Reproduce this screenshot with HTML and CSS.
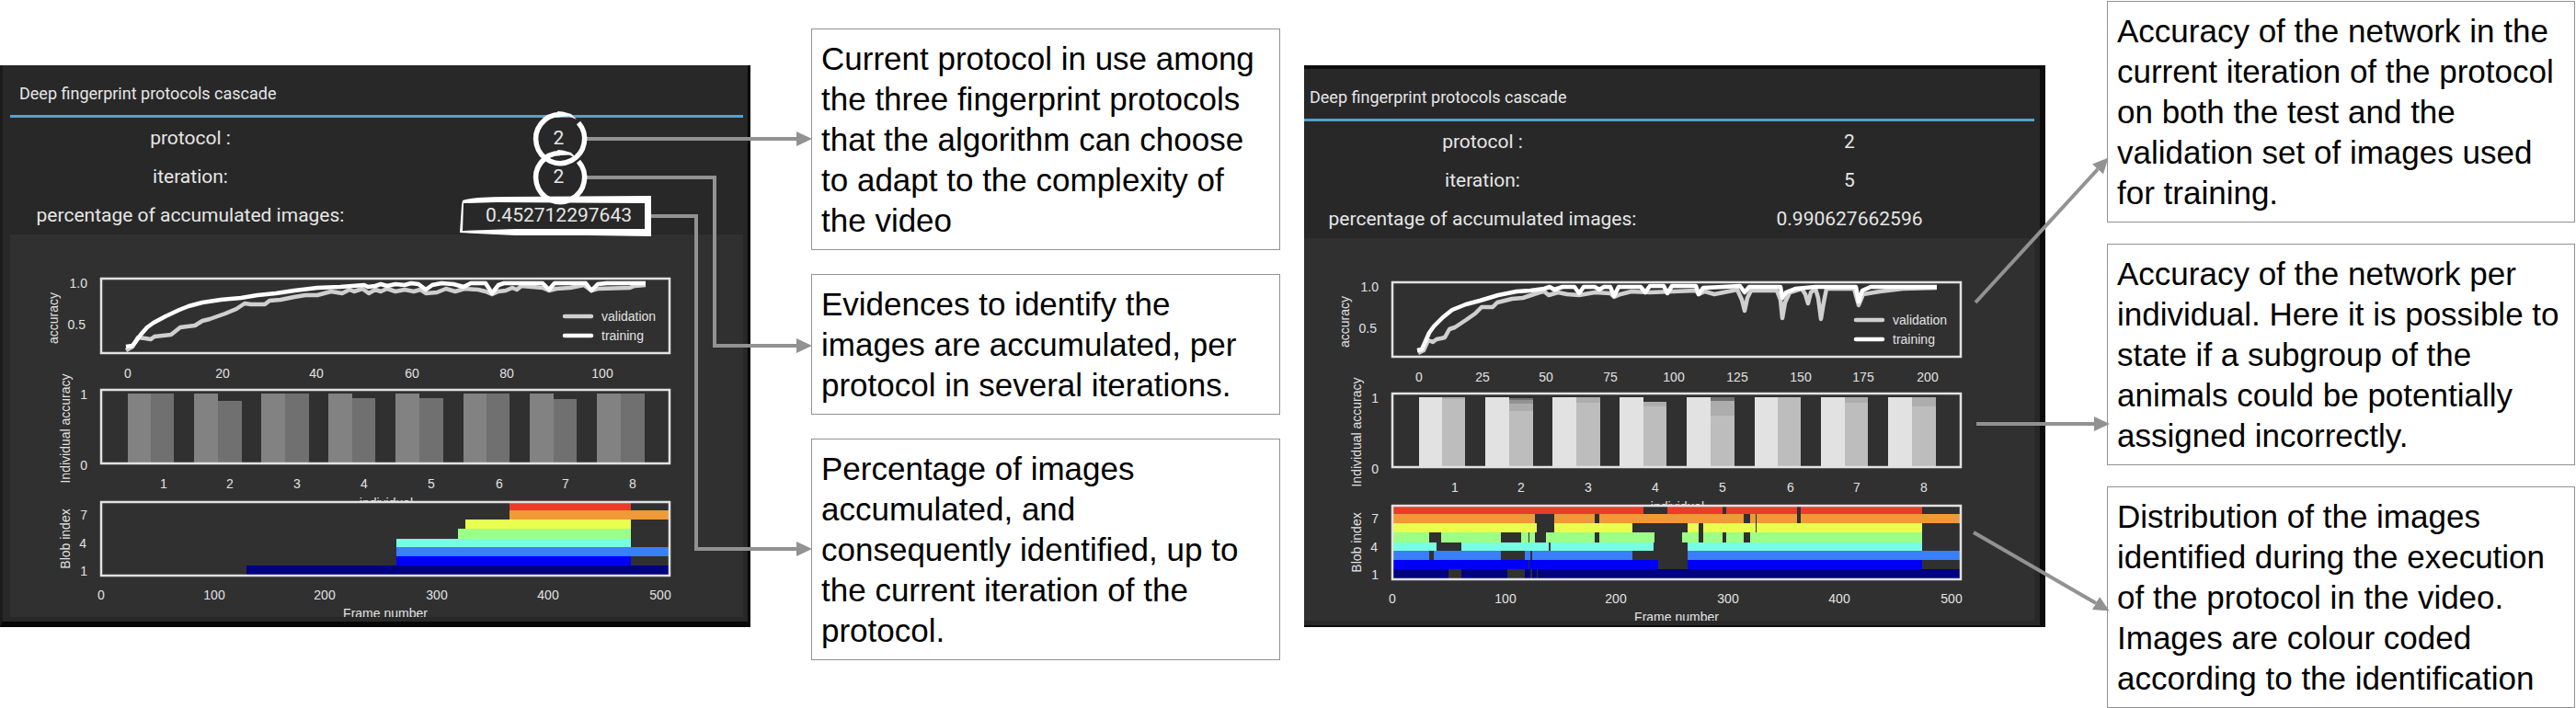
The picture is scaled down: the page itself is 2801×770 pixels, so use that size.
FILE: index.html
```html
<!DOCTYPE html>
<html lang="en">
<head>
<meta charset="utf-8">
<title>Deep fingerprint protocols cascade</title>
<link rel="stylesheet" href="styles.css">
</head>
<body>
<main class="figure">
  <section class="panel panel-early">
    <h2 class="panel-title">Deep fingerprint protocols cascade</h2>
    <dl class="stats">
      <dt>protocol :</dt><dd>2</dd>
      <dt>iteration:</dt><dd>2</dd>
      <dt>percentage of accumulated images:</dt><dd>0.452712297643</dd>
    </dl>
    <svg class="charts" viewBox="11 255 797 416" role="img" aria-label="Training charts, iteration 2">
      <g class="validation"><path d="M137 381L144 377 150 367 158 368 164 369 168 366 186 364 196 356 212 354 220 349 228 347 245 341 257 336 266 330 273 331 288 331 293 327 305 326 320 323 332 321 345 321 360 317 372 319 380 315 385 317 394 314 401 319 408 315 414 317 421 314 430 317 440 315 450 317 457 315 463 319 475 318 485 314 495 317 505 314 520 315 528 317 535 320 542 317 550 316 557 313 562 315 567 311 590 313 597 316 605 314 620 313 635 310 643 316 650 314 685 313 690 311 702 310"/></g>
      <g class="training"><path d="M137 377L144 376 148 371 153 364 160 356 167 351 180 344 195 337 205 333 220 329 240 326 262 324 280 321 300 319 320 316 345 313 370 312 396 310 400 312 408 311 414 309 421 311 430 309 440 310 447 308 455 309 463 315 470 310 480 308 493 309 504 312 512 308 528 308 535 319 542 310 548 308 590 308 597 315 603 308 637 308 643 316 650 309 660 308 702 308"/></g>
      <rect class="frame" x="110" y="303" width="618" height="81"/>
      <path class="validation" stroke-linecap="round" d="M614 344H643"/>
      <path class="training" stroke-linecap="round" d="M614 365H643"/>
      <text x="654" y="349">validation</text><text x="654" y="370">training</text>
      <g class="end"><text x="95" y="313">1.0</text><text x="93" y="358">0.5</text></g>
      <text class="mid" transform="translate(63 346) rotate(-90)">accuracy</text>
      <g class="mid"><text x="139" y="411">0</text><text x="242" y="411">20</text><text x="344" y="411">40</text><text x="448" y="411">60</text><text x="551" y="411">80</text><text x="655" y="411">100</text></g>

      <g fill="#828282"><path d="M139 428h25v76h-25zM211 428h26v76h-26zM284 428h26v76h-26zM357 428h26v76h-26zM430 428h26v76h-26zM504 428h25v76h-25zM576 428h26v76h-26zM649 428h26v76h-26z"/></g>
      <g fill="#707070"><path d="M164 428h25v76h-25zM237 436h26v68h-26zM310 428h26v76h-26zM383 433h25v71h-25zM456 433h26v71h-26zM529 428h25v76h-25zM602 434h25v70h-25zM675 428h26v76h-26z"/></g>
      <rect class="frame" x="110" y="424" width="618" height="80"/>
      <g class="end"><text x="95" y="434">1</text><text x="95" y="511">0</text></g>
      <text class="mid" transform="translate(76 466) rotate(-90)">Individual accuracy</text>
      <g class="mid"><text x="178" y="531">1</text><text x="250" y="531">2</text><text x="323" y="531">3</text><text x="396" y="531">4</text><text x="469" y="531">5</text><text x="543" y="531">6</text><text x="615" y="531">7</text><text x="688" y="531">8</text><text x="420" y="552">individual</text></g>

      <rect class="plot" x="110" y="546" width="618" height="80"/>
      <g class="raster">
        <path stroke="#ea3c26" stroke-width="8" d="M554 551H686"/>
        <path stroke="#ef9a36" stroke-width="10" d="M554 560H727"/>
        <path stroke="#e8ff50" stroke-width="10" d="M506 570H686"/>
        <path stroke="#9cff86" stroke-width="11" d="M498 580.500H686"/>
        <path stroke="#77ffe4" stroke-width="9" d="M431 590.500H686"/>
        <path stroke="#387ff8" stroke-width="10" d="M431 600H727"/>
        <path stroke="#0000f8" stroke-width="10" d="M431 610H686"/>
        <path stroke="#000080" stroke-width="10" d="M268 620H727"/>
      </g>
      <rect class="frame" x="110" y="546" width="618" height="80"/>
      <g class="end"><text x="95" y="565">7</text><text x="94" y="596">4</text><text x="95" y="626">1</text></g>
      <text class="mid" transform="translate(76 586) rotate(-90)">Blob index</text>
      <g class="mid"><text x="110" y="652">0</text><text x="233" y="652">100</text><text x="353" y="652">200</text><text x="475" y="652">300</text><text x="596" y="652">400</text><text x="718" y="652">500</text></g>
      <text class="mid" x="419" y="672">Frame number</text>
    </svg>
  </section>

  <div class="notes notes-early">
    <p class="note">Current protocol in use among<br>the three fingerprint protocols<br>that the algorithm can choose<br>to adapt to the complexity of<br>the video</p>
    <p class="note">Evidences to identify the<br>images are accumulated, per<br>protocol in several iterations.</p>
    <p class="note">Percentage of images<br>accumulated, and<br>consequently identified, up to<br>the current iteration of the<br>protocol.</p>
  </div>

  <section class="panel panel-late">
    <h2 class="panel-title">Deep fingerprint protocols cascade</h2>
    <dl class="stats">
      <dt>protocol :</dt><dd>2</dd>
      <dt>iteration:</dt><dd>5</dd>
      <dt>percentage of accumulated images:</dt><dd>0.990627662596</dd>
    </dl>
    <svg class="charts" viewBox="14 255 794 416" role="img" aria-label="Training charts, iteration 5">
      <rect class="frame" x="110" y="303" width="618" height="81"/>
      <g class="validation"><path d="M138 380L144 377 149 366 154 368 158 365 163 364 167 363 172 354 178 352 190 344 200 337 207 330 219 330 224 325 240 321 252 320 270 314 275 313 280 317 290 314 300 316 313 317 330 314 347 315 351 319 358 316 370 313 390 314 440 312 443 316 450 313 460 316 475 313 485 311 490 322 493 334 496 320 500 312 528 312 532 322 534 342 537 325 542 314 555 310 559 316 562 326 565 314 570 310 573 320 576 343 579 325 582 310 612 310 617 328 622 316 640 313 665 310 702 309"/></g>
      <g class="training"><path d="M137 377L142 376 146 367 150 358 155 351 165 341 175 333 190 327 205 323 225 317 245 313 260 312 275 310 281 308 286 311 295 308 308 308 313 315 318 308 330 308 335 311 340 308 347 308 351 318 356 308 380 308 385 314 390 307 405 307 409 315 414 307 440 307 443 316 448 309 470 308 488 307 493 314 498 308 532 308 534 320 538 314 548 310 570 308 614 308 617 324 621 312 630 308 702 308"/></g>
      <path class="validation" stroke-linecap="round" d="M614 344H643"/>
      <path class="training" stroke-linecap="round" d="M614 365H643"/>
      <text x="654" y="349">validation</text><text x="654" y="370">training</text>
      <g class="end"><text x="95" y="313">1.0</text><text x="93" y="358">0.5</text></g>
      <text class="mid" transform="translate(63 346) rotate(-90)">accuracy</text>
      <g class="mid"><text x="139" y="411">0</text><text x="208" y="411">25</text><text x="277" y="411">50</text><text x="347" y="411">75</text><text x="416" y="411">100</text><text x="485" y="411">125</text><text x="554" y="411">150</text><text x="622" y="411">175</text><text x="692" y="411">200</text></g>

      <g fill="#e2e2e2"><path d="M139 428h25v76h-25zM211 428h26v76h-26zM284 428h26v76h-26zM357 428h26v76h-26zM430 428h26v76h-26zM504 428h25v76h-25zM576 428h26v76h-26zM649 428h26v76h-26z"/></g>
      <g fill="#bdbdbd"><path d="M164 428h25v76h-25zM237 429h26v75h-26zM310 428h26v76h-26zM383 433h25v71h-25zM456 428h26v76h-26zM529 428h25v76h-25zM602 428h25v76h-25zM675 428h26v76h-26z"/></g>
      <g fill="#adadad"><path d="M164 428h25v2h-25zM237 435h26v8h-26zM310 428h26v6h-26zM383 433h25v5h-25zM456 432h26v16h-26zM602 428h25v6h-25zM675 428h26v10h-26z"/></g>
      <path fill="#929292" d="M237 431h26v4h-26z"/>
      <path fill="#707070" d="M237 429h26v2h-26zM456 428h26v4h-26z"/>
      <rect class="frame" x="110" y="424" width="618" height="80"/>
      <g class="end"><text x="95" y="434">1</text><text x="95" y="511">0</text></g>
      <text class="mid" transform="translate(76 466) rotate(-90)">Individual accuracy</text>
      <g class="mid"><text x="178" y="531">1</text><text x="250" y="531">2</text><text x="323" y="531">3</text><text x="396" y="531">4</text><text x="469" y="531">5</text><text x="543" y="531">6</text><text x="615" y="531">7</text><text x="688" y="531">8</text><text x="420" y="552">individual</text></g>

      <rect class="plot" x="110" y="546" width="618" height="80"/>
      <g class="raster">
        <path stroke="#ea3c26" stroke-width="8" d="M111 551H383M409 551H469M473 551H550M554 551H686"/>
        <path stroke="#ef9a36" stroke-width="10" d="M111 560H265M286 560H330M335 560H492M499 560H505M506 560H550M554 560H727"/>
        <path stroke="#e8ff50" stroke-width="10" d="M111 570H267M286 570H371M431 570H443M448 570H505M506 570H686"/>
        <path stroke="#9cff86" stroke-width="11" d="M111 580.500H150M163 580.500H228M250 580.500H258M259 580.500H265M277 580.500H330M335 580.500H395M425 580.500H443M448 580.500H469M473 580.500H492M499 580.500H686"/>
        <path stroke="#77ffe4" stroke-width="9" d="M111 590.500H158M185 590.500H280M282 590.500H394M431 590.500H686"/>
        <path stroke="#387ff8" stroke-width="10" d="M111 600H150M155 600H228M254 600H260M262 600H371M431 600H727"/>
        <path stroke="#0000f8" stroke-width="10" d="M111 610H258M259 610H399M431 610H686"/>
        <path stroke="#000080" stroke-width="10" d="M111 620H171M185 620H235M254 620H260M262 620H267M268 620H727"/>
      </g>
      <rect class="frame" x="110" y="546" width="618" height="80"/>
      <g class="end"><text x="95" y="565">7</text><text x="94" y="596">4</text><text x="95" y="626">1</text></g>
      <text class="mid" transform="translate(76 586) rotate(-90)">Blob index</text>
      <g class="mid"><text x="110" y="652">0</text><text x="233" y="652">100</text><text x="353" y="652">200</text><text x="475" y="652">300</text><text x="596" y="652">400</text><text x="718" y="652">500</text></g>
      <text class="mid" x="419" y="672">Frame number</text>
    </svg>
  </section>

  <div class="notes notes-late">
    <p class="note">Accuracy of the network in the<br>current iteration of the protocol<br>on both the test and the<br>validation set of images used<br>for training.</p>
    <p class="note">Accuracy of the network per<br>individual. Here it is possible to<br>state if a subgroup of the<br>animals could be potentially<br>assigned incorrectly.</p>
    <p class="note">Distribution of the images<br>identified during the execution<br>of the protocol in the video.<br>Images are colour coded<br>according to the identification</p>
  </div>

  <!-- Arrows and hand-drawn marks laid over the panels -->
  <svg class="overlay" viewBox="0 0 2801 770" aria-hidden="true">
    <defs>
      <marker id="head" markerUnits="userSpaceOnUse" markerWidth="17" markerHeight="18" refX="0" refY="9" orient="auto"><path d="M0 1L17 9 0 17z" fill="#929292"/></marker>
      <g id="ring">
        <path d="M20-17.500A26.500 26.500 0 1 1 0-26.500" fill="none" stroke="#fff" stroke-width="5.500"/>
        <path d="M-3-30L3-29.500 12-27 18-21 10-24.500 0-24z" fill="#fff"/>
      </g>
    </defs>
    <g class="arrows">
      <path d="M638 151H866"/>
      <path d="M638 193H777V376H866"/>
      <path d="M708 235H757V597H866"/>
      <path d="M2148 329L2281 184"/>
      <path d="M2149 461H2277"/>
      <path d="M2146 579L2279 656"/>
    </g>
    <use href="#ring" x="609" y="151"/>
    <use href="#ring" x="609" y="193"/>
    <path fill="#fff" fill-rule="evenodd" d="M503 218Q515 214 550 214L708 213V257L640 256 560 256 500 253 502 223zM504 221L503 251 560 249 701 249V221L540 220z"/>
  </svg>
</main>
</body>
</html>
```
FILE: styles.css
```css
* { box-sizing: border-box; }

body {
  margin: 0;
  background: #fff;
  font-family: Roboto, "Liberation Sans", sans-serif;
}

.figure {
  position: relative;
  display: grid;
  grid-template-columns:
    minmax(0, 816fr) minmax(0, 66fr) minmax(0, 510fr) minmax(0, 26fr)
    minmax(0, 806fr) minmax(0, 67fr) minmax(0, 509fr) minmax(0, 1fr);
  align-items: start;
}

.panel {
  margin-top: 71px;
  background: #282828;
  color: #e6e6e6;
}

.panel-early {
  grid-column: 1;
  padding: 0 5px 5px 8px;
  border: solid #070707;
  border-width: 0 3px 6px 0;
  border-left: 3px solid #1b1b1b;
}

.panel-late {
  grid-column: 5;
  padding: 0 6px 5px 0;
  border: solid #0c0c0c;
  border-width: 4px 6px 2px 0;
}

.panel-title {
  margin: 0;
  padding: 20px 10px 12px;
  border-bottom: 3px solid #53a2cf;
  font-size: 18px;
  line-height: 22px;
  font-weight: 400;
}

.panel-late .panel-title { padding-left: 6px; }

.stats {
  display: grid;
  grid-template-columns: 392fr 405fr;
  margin: 0;
  padding-top: 1px;
  font-size: 21px;
  line-height: 42px;
  text-align: center;
}

.panel-late .stats { grid-template-columns: 388fr 406fr; }

.stats dd {
  margin: 0;
  padding-left: 4px;
}

.charts {
  display: block;
  width: 100%;
  height: auto;
  background: #303030;
  font-family: "Liberation Sans", Arial, sans-serif;
  font-size: 14px;
  fill: #e2e2e2;
}

.charts .mid { text-anchor: middle; }
.charts .end { text-anchor: end; }
.charts .plot { fill: #303030; }

.charts .frame {
  fill: none;
  stroke: #e3e1e3;
  stroke-width: 2.5;
}

.charts .validation,
.charts .training {
  fill: none;
  stroke: #cfcfcf;
  stroke-width: 4.5;
  stroke-linejoin: round;
}

.charts .training { stroke: #fff; }

.notes {
  display: flex;
  flex-direction: column;
}

.notes-early {
  grid-column: 3;
  margin-top: 31px;
  gap: 26px;
}

.notes-late {
  grid-column: 7;
  margin-top: 1px;
  gap: 23px;
}

.note {
  margin: 0;
  padding: 10px 0 9px 10px;
  border: 1px solid #929292;
  color: #000;
  font-family: "Liberation Sans", Arial, sans-serif;
  font-size: 35px;
  line-height: 44px;
  white-space: nowrap;
}

.overlay {
  position: absolute;
  top: 0;
  left: 0;
  width: 100%;
  height: auto;
  pointer-events: none;
}

.arrows path {
  fill: none;
  stroke: #929292;
  stroke-width: 4;
  marker-end: url(#head);
}
```
